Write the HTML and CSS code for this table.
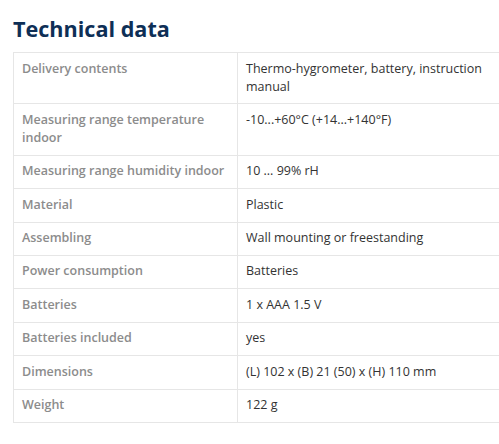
FILE: index.html
```html
<!DOCTYPE html>
<html lang="en">
<head>
<meta charset="utf-8">
<title>Technical data</title>
<link rel="stylesheet" href="styles.css">
</head>
<body>
<section class="techdata">
  <h2 class="techdata-title">Technical data</h2>
  <table class="techdata-table">
    <tbody>
      <tr><th>Delivery contents</th><td>Thermo-hygrometer, battery, instruction manual</td></tr>
      <tr><th>Measuring range temperature indoor</th><td>-10...+60°C (+14...+140°F)</td></tr>
      <tr><th>Measuring range humidity indoor</th><td>10 ... 99% rH</td></tr>
      <tr><th>Material</th><td>Plastic</td></tr>
      <tr><th>Assembling</th><td>Wall mounting or freestanding</td></tr>
      <tr><th>Power consumption</th><td>Batteries</td></tr>
      <tr><th>Batteries</th><td>1 x AAA 1.5 V</td></tr>
      <tr><th>Batteries included</th><td>yes</td></tr>
      <tr><th>Dimensions</th><td>(L) 102 x (B) 21 (50) x (H) 110 mm</td></tr>
      <tr><th>Weight</th><td>122 g</td></tr>
    </tbody>
  </table>
</section>
</body>
</html>
```
FILE: styles.css
```css
html, body {
  margin: 0;
  padding: 0;
  background: #fff;
  overflow: hidden;
}
body {
  font-family: "Open Sans", "Liberation Sans", sans-serif;
}
.techdata {
  padding: 14px 0 0 13px;
}
.techdata-title {
  margin: 0 0 8px;
  font-size: 21.6px;
  line-height: 30px;
  font-weight: 700;
  color: #0e2f56;
}
.techdata-table {
  border-collapse: collapse;
  width: 500px;
  font-size: 12.5px;
  line-height: 18px;
}
.techdata-table th,
.techdata-table td {
  border: 1px solid #e6e6e6;
  padding: 6.5px 8px 7.9px 8px;
  vertical-align: top;
  text-align: left;
}
.techdata-table th {
  width: 207px;
  font-weight: 600;
  color: #8c8c8c;
}
.techdata-table td {
  font-weight: 400;
  color: #333;
}
```
